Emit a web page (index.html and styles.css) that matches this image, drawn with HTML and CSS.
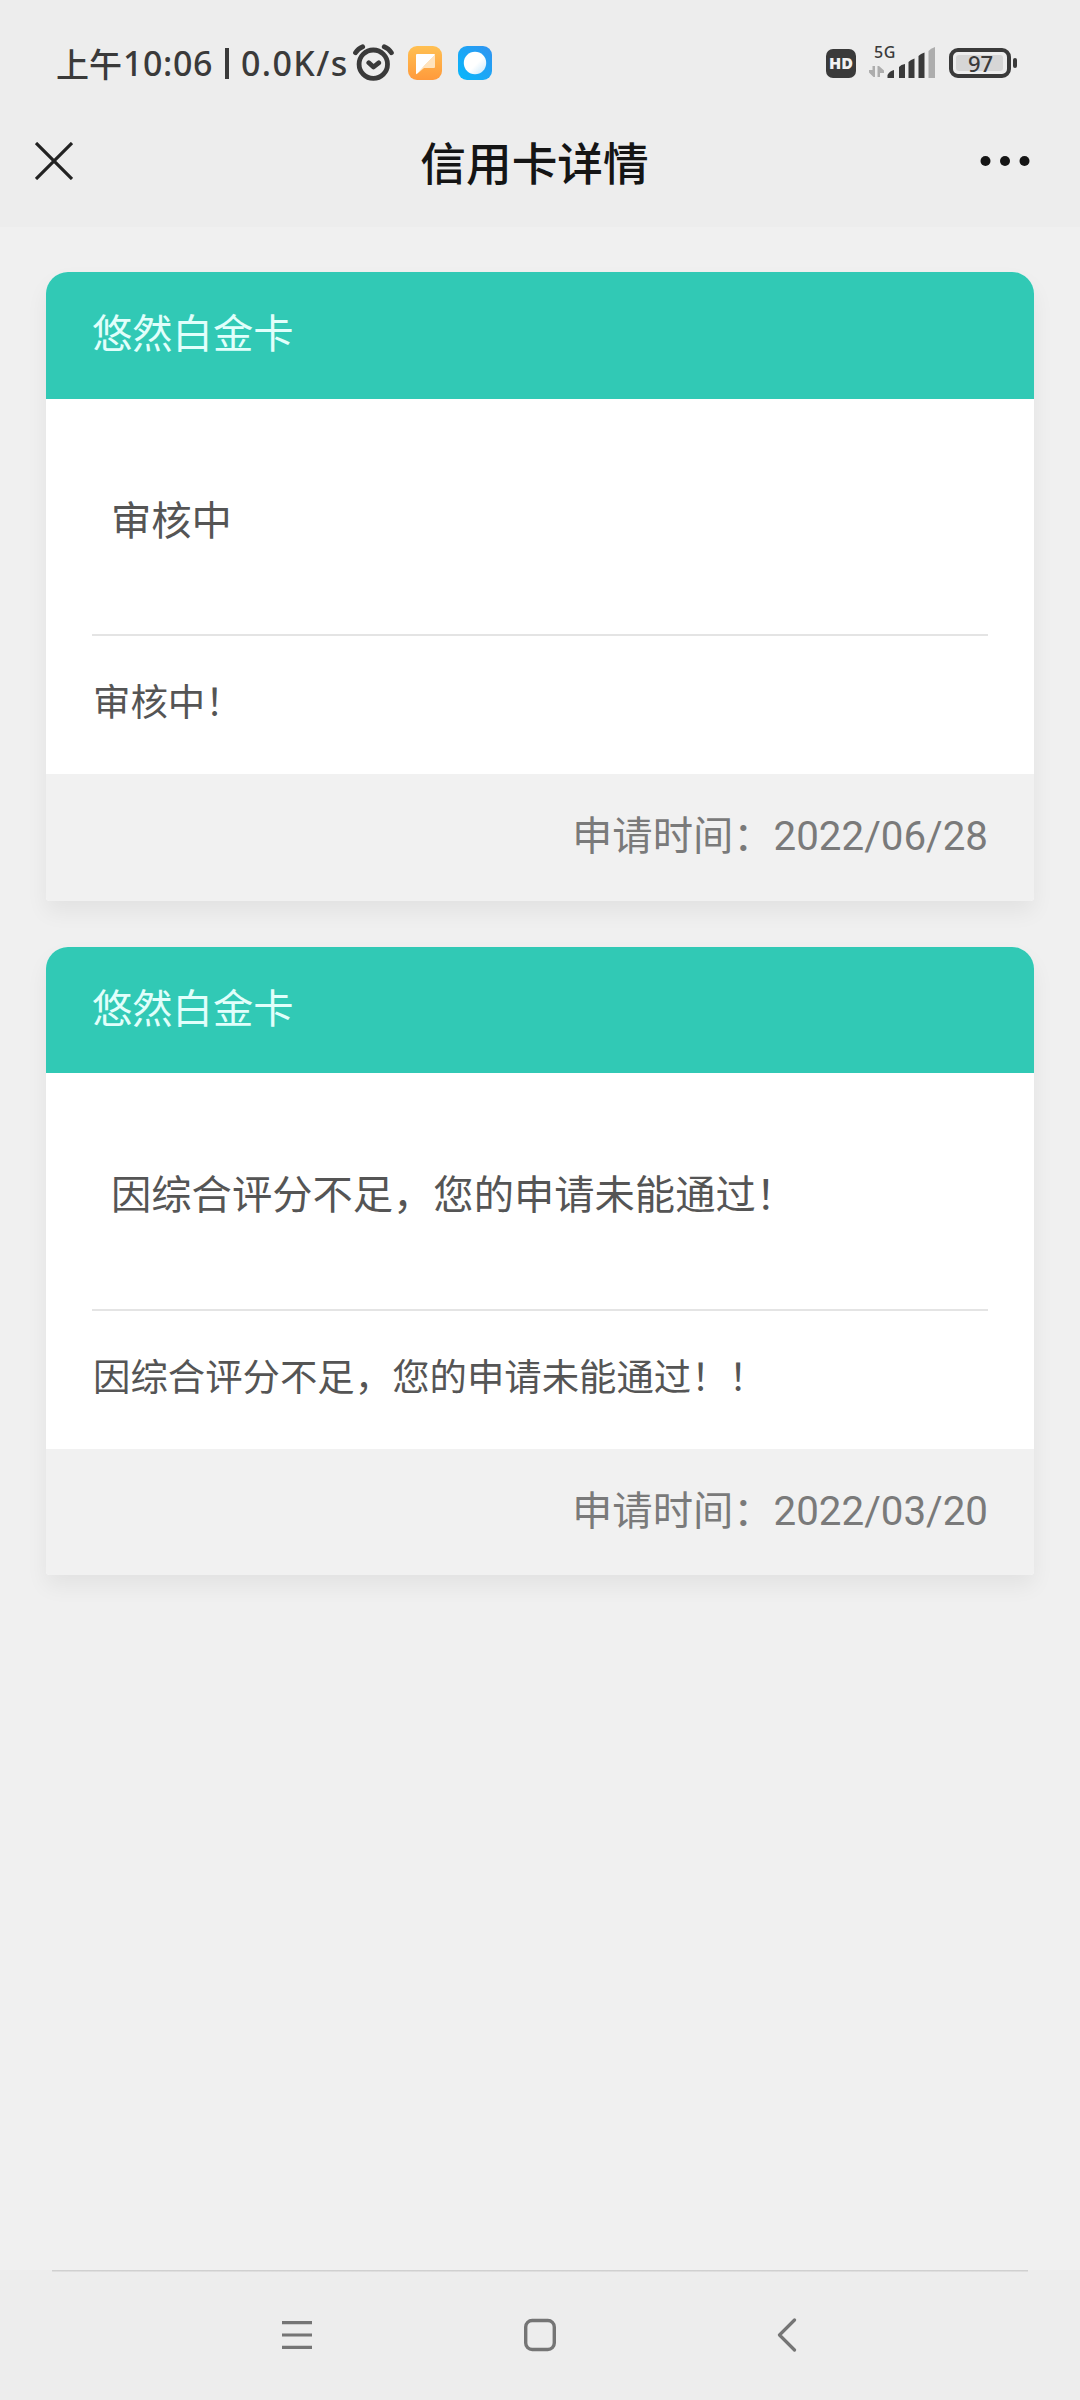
FILE: index.html
```html
<!DOCTYPE html>
<html lang="zh-CN">
<head>
<meta charset="utf-8">
<title>信用卡详情</title>
<link rel="stylesheet" href="styles.css">
</head>
<body>
<div class="screen">
  <div class="status">
    <span class="status-day">上午</span><span class="status-time">10:06</span><i class="status-bar"></i><span class="status-speed">0.0K/s</span>
    <svg class="icon-left" width="140" height="40" viewBox="353 43 140 40">
      <defs>
        <linearGradient id="orange" x1="0" y1="0" x2="0" y2="1"><stop offset="0" stop-color="#ffc052"/><stop offset="1" stop-color="#ff9a3c"/></linearGradient>
        <linearGradient id="blue" x1="1" y1="0" x2="0" y2="1"><stop offset="0" stop-color="#3193f0"/><stop offset="1" stop-color="#08b8fb"/></linearGradient>
        <linearGradient id="fold" x1="0" y1="0" x2="1" y2="1"><stop offset="0.5" stop-color="#fff"/><stop offset="0.51" stop-color="#ffe3bd"/></linearGradient>
        <linearGradient id="ball" x1="0" y1="0" x2="1" y2="1"><stop offset="0.55" stop-color="#fff"/><stop offset="1" stop-color="#c4e6fb"/></linearGradient>
      </defs>
      <g fill="none" stroke="#3a3a3a" stroke-width="4.8" stroke-linecap="round" stroke-linejoin="round">
        <circle cx="373.3" cy="64.2" r="14.2"/>
        <path d="M368.8 62.8l4.7 4.2 5.2-4.2M355.5 52.8q2.6-4.2 7.2-6M384.2 46.8q4.6 1.8 7.2 6"/>
      </g>
      <rect x="408" y="46" width="34" height="34" rx="9" fill="url(#orange)"/>
      <path d="M417 54h17q1 0 1 1v12q0 1-1 1h-10l-7 6q-1 .5-1-1V55q0-1 1-1z" fill="url(#fold)"/>
      <rect x="458" y="46" width="34" height="34" rx="9" fill="url(#blue)"/>
      <circle cx="475" cy="63" r="11.2" fill="url(#ball)"/>
    </svg>
    <span class="hd">HD</span>
    <div class="signal">
      <span class="net">5G</span>
      <svg width="67" height="32" viewBox="869 48 67 32">
        <path d="M872.5 67h2.500v11h-1.500l-5-5v-2h4zM877.500 78V67h1.500l5 4.500v2.500h-4v4z" fill="#adadad"/>
        <g fill="#3a3a3a"><path d="M887.5 79v-3q2-4 6.500-5v8zM899 79V68q2-2.500 6-3v14zM908.500 79V63q2-2.500 6-3.500V79zM918.500 79V57q2-2.500 6-3.500V79z"/></g>
        <path d="M928.5 79V52q2-2.500 6.500-4v31z" fill="#adadad"/>
      </svg>
    </div>
    <div class="battery"><span class="level">97</span></div>
  </div>
  <div class="nav">
    <svg class="close" width="38" height="38" viewBox="0 0 38 38"><path d="M1 1l36 36M37 1L1 37" stroke="#222" stroke-width="3.2"/></svg>
    <h1 class="title">信用卡详情</h1>
    <svg class="more" width="50" height="12" viewBox="0 0 50 12" fill="#151515"><circle cx="5.5" cy="6" r="5"/><circle cx="25" cy="6" r="5"/><circle cx="44.5" cy="6" r="5"/></svg>
  </div>
  <div class="list">
    <section class="card">
      <header class="card-head">悠然白金卡</header>
      <div class="card-body">
        <p class="state">审核中</p>
        <p class="reason">审核中！</p>
      </div>
      <footer class="card-foot">申请时间：2022/06/28</footer>
    </section>
    <section class="card">
      <header class="card-head">悠然白金卡</header>
      <div class="card-body">
        <p class="state">因综合评分不足，您的申请未能通过！</p>
        <p class="reason">因综合评分不足，您的申请未能通过！！</p>
      </div>
      <footer class="card-foot">申请时间：2022/03/20</footer>
    </section>
  </div>
  <div class="dock">
    <svg class="menu" width="30" height="34" viewBox="0 0 30 34"><path d="M0 4.7h30M0 17h30M0 29.3h30" stroke="#757575" stroke-width="3.2"/></svg>
    <svg class="home" width="32" height="34" viewBox="0 0 32 34"><rect x="1.7" y="2.5" width="28.6" height="29" rx="6.5" fill="none" stroke="#757575" stroke-width="3.4"/></svg>
    <svg class="back" width="20" height="34" viewBox="0 0 20 34"><path d="M17.5 2L2.500 17l15 15" fill="none" stroke="#757575" stroke-width="3.2" stroke-linejoin="round" stroke-linecap="round"/></svg>
  </div>
</div>
</body>
</html>
```
FILE: styles.css
```css
* { box-sizing: border-box; margin: 0; padding: 0; }
body { background: #f0f0f0; font-family: Roboto, "Noto Sans CJK SC", sans-serif; }
svg { display: block; flex: none; }
.screen { width: 1080px; height: 2400px; display: flex; flex-direction: column; overflow: hidden; }

.status { height: 126px; flex: none; display: flex; align-items: center; padding-left: 56px; background: #ededed; color: #3a3a3a; font-family: "Noto Sans", "Noto Sans CJK SC", sans-serif; font-size: 34px; font-weight: 500; line-height: 40px; white-space: nowrap; }
.status-day { width: 67px; font-family: "Noto Sans CJK SC", sans-serif; font-size: 33px; }
.status-time { width: 102px; letter-spacing: .6px; }
.status-bar { width: 4px; height: 31px; background: #3a3a3a; }
.status-speed { width: 111px; margin-left: 12px; letter-spacing: 1.4px; }
.icon-left { margin-left: 1px; margin-right: 333px; }
.hd { width: 30px; height: 29px; flex: none; border-radius: 7px; background: #3a3a3a; color: #f2f2f2; font: 800 16px/29px "Open Sans", sans-serif; text-align: center; }
.signal { position: relative; margin-left: 13px; }
.net { position: absolute; left: 5px; top: -5px; font-size: 16px; line-height: 20px; letter-spacing: .5px; }
.battery { position: relative; width: 62px; height: 30px; flex: none; margin-left: 13px; border: 4px solid #3a3a3a; border-radius: 9px; padding: 3px; }
.battery::after { content: ""; position: absolute; right: -10px; top: 6px; width: 4px; height: 10px; border-radius: 2px; background: #3a3a3a; }
.level { display: block; width: 47px; height: 16px; border-radius: 3px; background: #d6d6d6; font-size: 22px; line-height: 17px; text-align: center; padding-left: 2px; }

.nav { height: 101px; flex: none; display: grid; grid-template-columns: 35px 38px 1fr 50px 50px; align-items: start; background: #ededed; }
.close { grid-column: 2; margin-top: 16px; }
.title { color: #151515; font: 500 45.7px/60px "Noto Sans CJK SC", sans-serif; text-align: center; margin-top: 5px; padding-left: 16px; }
.more { margin-top: 29px; }

.list { flex: 1; display: flex; flex-direction: column; gap: 46px; padding: 45px 46px 0; }
.card { border-radius: 22px 22px 4px 4px; background: #fff; box-shadow: 0 11px 22px rgba(0, 0, 0, .06); }
.card-head { height: 126.5px; padding: 33px 46px 0; border-radius: 22px 22px 0 0; background: #31c9b5; color: #e1fffb; font-size: 40.3px; line-height: 60px; }
.card-body { height: 375.5px; padding: 0 46px; color: #555; }
.state { height: 237.7px; padding: 93px 0 0 19px; border-bottom: 2px solid #e4e4e4; font-size: 40.3px; line-height: 60px; }
.reason { padding: 37.3px 0 0 1px; font-size: 37.4px; line-height: 60px; }
.card-foot { height: 126.5px; padding: 33px 46px 0; border-radius: 0 0 4px 4px; background: #f1f1f1; color: #7a7a7a; font-size: 40.3px; line-height: 60px; text-align: right; }

.dock { height: 130px; flex: none; display: grid; grid-template-columns: 282px 242px 253px 1fr; padding-top: 48px; background: linear-gradient(#d0d0d0, #d0d0d0) 52px 0 / 976px 1.5px no-repeat #ededed; }
.menu { grid-column: 2; }
.home { grid-column: 3; }
```
